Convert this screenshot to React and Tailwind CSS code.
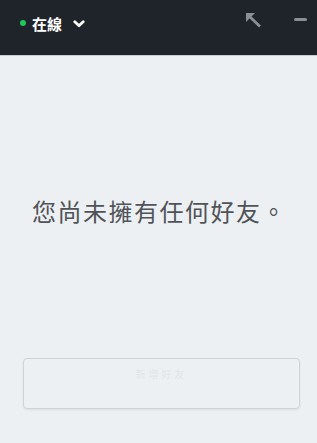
export default function App() {
  return (
    <div
      className="w-[317px] h-[443px] flex flex-col bg-[#edf0f2] overflow-hidden"
      style={{ fontFamily: '"Noto Sans CJK TC", "Noto Sans", sans-serif' }}
    >
      <div className="h-[56px] shrink-0 bg-[#1f232a] border-b border-[#c9cdd1] flex items-start pt-[12px] pl-[20px] pr-[10px]">
        <div className="flex items-center h-[22px]">
          <span className="w-[6px] h-[6px] rounded-full bg-[#1ec95a]" />
          <span className="ml-[6px] text-[15px] font-bold text-white leading-none">在線</span>
          <svg className="ml-[11px] mt-[1px]" width="12" height="8" viewBox="0 0 12 8">
            <path d="M1.8 1.8 L6 5.8 L10.2 1.8" stroke="#fff" strokeWidth="2.8" fill="none" strokeLinecap="round" strokeLinejoin="round" />
          </svg>
        </div>
        <div className="ml-auto flex items-start">
          <svg width="17" height="16" viewBox="0 0 17 16">
            <path d="M3 3 L15 14.5" stroke="#8a8f96" strokeWidth="2.8" />
            <path d="M1 1 H10 L1 10 Z" fill="#8a8f96" />
          </svg>
          <span className="ml-[32px] mt-[6px] w-[13px] h-[3px] rounded-full bg-[#8a8f96]" />
        </div>
      </div>
      <div className="flex-1 flex flex-col">
        <div className="mt-[143px] text-center text-[24px] text-[#505358] leading-none tracking-[1.5px] pl-[2px]">
          您尚未擁有任何好友。
        </div>
        <div className="mt-[135px] ml-[23px] w-[277px] h-[51px] rounded-[4px] border border-[#cfd3d7] shadow-[0_1px_2px_rgba(0,0,0,0.08)] flex justify-center pt-[10px]">
          <span className="text-[10px] text-[#e2e5e8] leading-none tracking-[3px]">新增好友</span>
        </div>
      </div>
    </div>
  );
}
